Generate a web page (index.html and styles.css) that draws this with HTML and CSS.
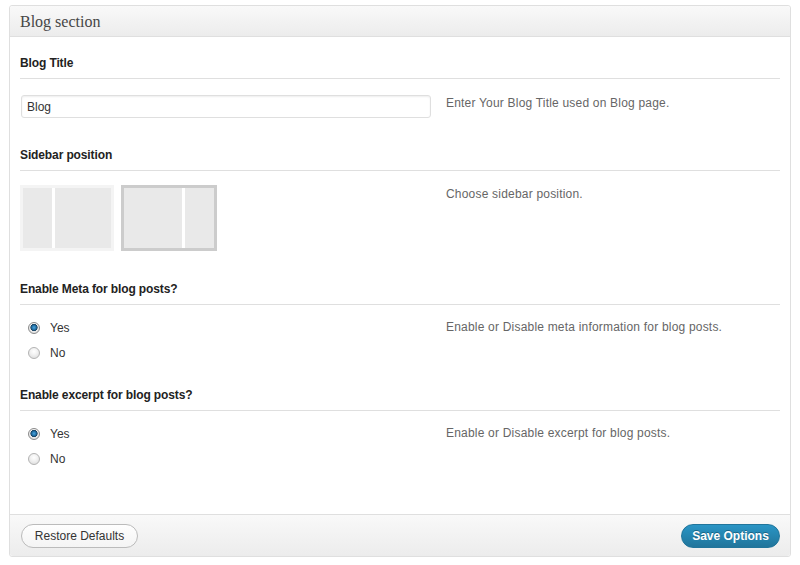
FILE: index.html
```html
<!DOCTYPE html>
<html>
<head>
<meta charset="utf-8">
<link rel="stylesheet" href="styles.css">
</head>
<body>
<div class="panel">
  <div class="panel-head"><h3>Blog section</h3></div>
  <div class="panel-body">
    <div class="section sec-input">
      <h4 class="title">Blog Title</h4>
      <div class="row row-input">
        <div class="control"><input class="text" type="text" value="Blog"></div>
        <div class="desc">Enter Your Blog Title used on Blog page.</div>
      </div>
    </div>
    <div class="section sec-images">
      <h4 class="title">Sidebar position</h4>
      <div class="row row-images">
        <div class="control images">
          <div class="layout">
            <div class="pane narrow"></div>
            <div class="pane wide"></div>
          </div>
          <div class="layout selected">
            <div class="pane wide"></div>
            <div class="pane narrow"></div>
          </div>
        </div>
        <div class="desc desc-images">Choose sidebar position.</div>
      </div>
    </div>
    <div class="section sec-radio">
      <h4 class="title">Enable Meta for blog posts?</h4>
      <div class="row row-radio">
        <div class="control radios">
          <label class="opt"><input type="radio" name="meta" checked><span>Yes</span></label>
          <label class="opt"><input type="radio" name="meta"><span>No</span></label>
        </div>
        <div class="desc desc-radio">Enable or Disable meta information for blog posts.</div>
      </div>
    </div>
    <div class="section sec-radio">
      <h4 class="title">Enable excerpt for blog posts?</h4>
      <div class="row row-radio">
        <div class="control radios">
          <label class="opt"><input type="radio" name="excerpt" checked><span>Yes</span></label>
          <label class="opt"><input type="radio" name="excerpt"><span>No</span></label>
        </div>
        <div class="desc desc-radio">Enable or Disable excerpt for blog posts.</div>
      </div>
    </div>
  </div>
  <div class="panel-foot">
    <button class="btn btn-secondary" type="button">Restore Defaults</button>
    <button class="btn btn-primary" type="button">Save Options</button>
  </div>
</div>
</body>
</html>
```
FILE: styles.css
```css
* { box-sizing: border-box; }
html, body { margin: 0; padding: 0; background: #fff; }
body {
  font-family: "Liberation Sans", Arial, sans-serif;
  font-size: 12px;
  color: #333;
  padding: 5px 9px 0 9px;
}
.panel {
  width: 782px;
  height: 552px;
  border: 1px solid #dfdfdf;
  border-radius: 3px;
  display: flex;
  flex-direction: column;
  background: #fff;
}
.panel-head {
  height: 31px;
  background: linear-gradient(#f9f9f9, #ececec);
  border-bottom: 1px solid #dfdfdf;
  padding: 0 10px;
  border-radius: 3px 3px 0 0;
}
.panel-head h3 {
  margin: 0;
  font-family: "Liberation Serif", "Times New Roman", serif;
  font-weight: normal;
  font-size: 16px;
  line-height: 31px;
  color: #464646;
}
.panel-body {
  flex: 1;
  padding: 18px 10px 0 10px;
}
.sec-input { margin-bottom: 29px; }
.sec-images { margin-bottom: 30px; }
.sec-radio { margin-bottom: 22px; }
.title {
  margin: 0;
  font-size: 12px;
  font-weight: bold;
  line-height: 16px;
  color: #222;
  letter-spacing: -0.12px;
  padding-bottom: 7px;
  border-bottom: 1px solid #dfdfdf;
}
.row {
  display: grid;
  grid-template-columns: 411px 1fr;
  column-gap: 15px;
  margin-top: 16px;
}
.desc {
  color: #666;
  line-height: 16px;
  letter-spacing: 0.2px;
}
.desc-images { padding-top: 1px; }
.desc-radio { padding-top: 4px; }
.control { padding-left: 1px; }
.text {
  width: 410px;
  height: 23px;
  border: 1px solid #dfdfdf;
  border-radius: 3px;
  box-shadow: inset 0 1px 2px rgba(0,0,0,0.07);
  padding: 0 5px;
  font-family: "Liberation Sans", Arial, sans-serif;
  font-size: 12px;
  color: #333;
  background: #fff;
  margin: 0;
}
.row-images { margin-top: 14px; }
.images {
  display: flex;
  gap: 7px;
  padding-left: 0;
}
.layout {
  width: 94px;
  height: 66px;
  border: 3px solid #f4f4f4;
  display: flex;
  gap: 3px;
  background: #fff;
}
.layout.selected {
  width: 96px;
  border-color: #cccccc;
}
.pane { background: #e9e9e9; height: 100%; }
.narrow { width: 29px; }
.wide { flex: 1; }
.row-radio { margin-top: 10px; }
.radios { display: flex; flex-direction: column; padding-left: 8px; }
.opt {
  display: flex;
  align-items: center;
  height: 25px;
  color: #333;
}
.opt span { margin-left: 10px; }
.opt input {
  -webkit-appearance: none;
  appearance: none;
  width: 12px;
  height: 12px;
  margin: 0;
  border-radius: 50%;
  border: 1px solid #b3b3b3;
  background: radial-gradient(circle at 50% 35%, #ffffff 0, #f2f2f2 40%, #d8d8d8 100%);
}
.opt input:checked {
  background:
    radial-gradient(circle at 50% 45%, #4fa6dd 0, #1f6fa6 2.2px, #173f5c 3.3px, rgba(255,255,255,0) 3.9px),
    radial-gradient(circle at 50% 35%, #ffffff 0, #f2f2f2 40%, #d8d8d8 100%);
  border-color: #8a8a8a;
}
.panel-foot {
  height: 42px;
  border-top: 1px solid #dfdfdf;
  background: linear-gradient(#f9f9f9, #ececec);
  display: flex;
  align-items: center;
  justify-content: space-between;
  padding: 0 10px 0 11px;
  border-radius: 0 0 3px 3px;
}
.btn {
  height: 24px;
  border-radius: 12px;
  font-family: "Liberation Sans", Arial, sans-serif;
  font-size: 12px;
  padding: 0;
  margin: 0;
  line-height: 22px;
  white-space: nowrap;
  text-align: center;
}
.btn-secondary {
  border: 1px solid #bbbbbb;
  background: linear-gradient(#fefefe, #f4f4f4);
  color: #333;
  width: 117px;
}
.btn-primary {
  border: 1px solid #21759b;
  background: linear-gradient(#2a95c5, #21759b);
  color: #fff;
  font-weight: bold;
  text-shadow: 0 -1px 0 rgba(0,0,0,0.3);
  width: 99px;
}
```
